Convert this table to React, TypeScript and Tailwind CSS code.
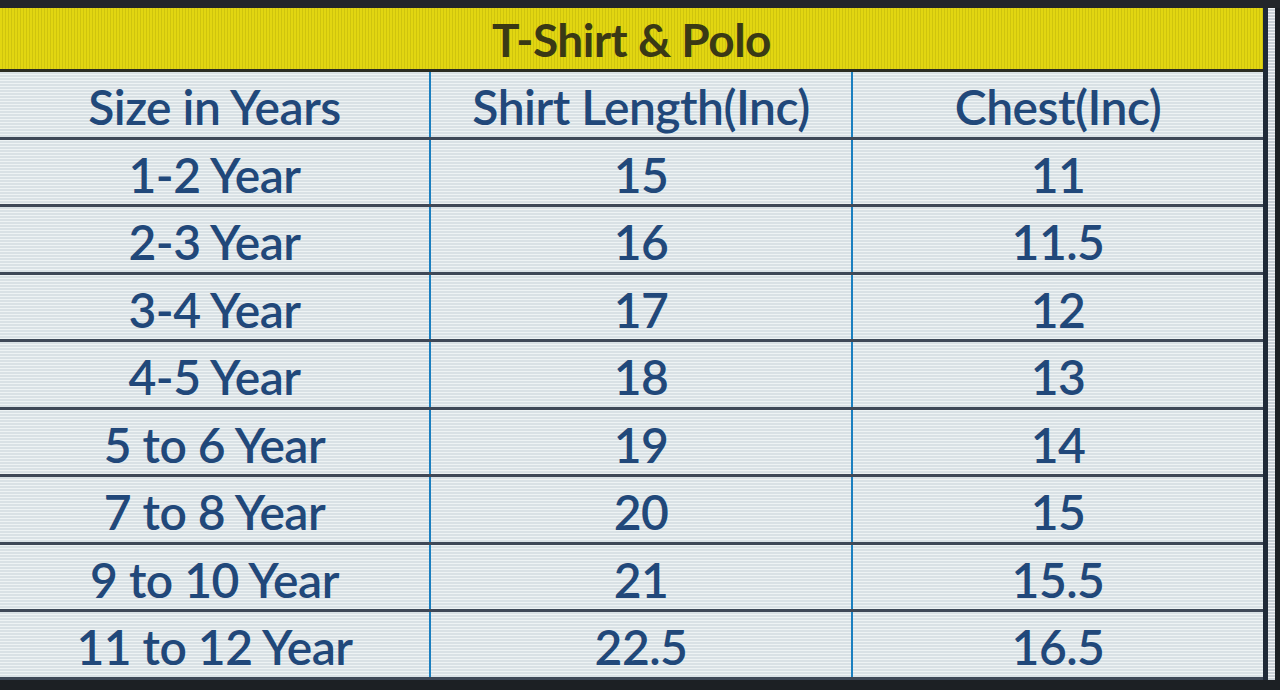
const rows: [string, string, string][] = [
  ["1-2 Year", "15", "11"],
  ["2-3 Year", "16", "11.5"],
  ["3-4 Year", "17", "12"],
  ["4-5 Year", "18", "13"],
  ["5 to 6 Year", "19", "14"],
  ["7 to 8 Year", "20", "15"],
  ["9 to 10 Year", "21", "15.5"],
  ["11 to 12 Year", "22.5", "16.5"],
];

const cell =
  "flex items-center justify-center pt-[6px] text-[48px] leading-none font-semibold text-[#21487a] tracking-[-0.5px]";

function Row({ cells }: { cells: [string, string, string] }) {
  return (
    <div className="grid h-[67.5px] grid-cols-[429px_2px_420px_2px_1fr] border-b-[3px] border-[#3e4857]">
      <div className={cell}>{cells[0]}</div>
      <div className="bg-[#1b7fbf]" />
      <div className={cell}>{cells[1]}</div>
      <div className="bg-[#1b7fbf]" />
      <div className={cell}>{cells[2]}</div>
    </div>
  );
}

export default function App() {
  return (
    <div
      className="flex h-[690px] w-[1280px] flex-col overflow-hidden bg-[#1c2024]"
      style={{ fontFamily: "Lato, 'Open Sans', sans-serif" }}
    >
      <div className="h-[8px] bg-[#23262a]" />
      <div className="flex">
        <div className="w-[1263px]">
          {/* Title bar */}
          <div className="flex h-[64px] items-center justify-center border-b-[3px] border-[#2b2c22] bg-[repeating-linear-gradient(90deg,#e2d611_0px,#e2d611_2px,#cfc40e_2px,#cfc40e_3px)]">
            <span className="pt-[2px] text-[46px] leading-none font-bold text-[#3a3915] tracking-[-0.5px]">
              T-Shirt &amp; Polo
            </span>
          </div>

          {/* Table body */}
          <div className="bg-[repeating-linear-gradient(0deg,#d9e1e5_0px,#d9e1e5_2px,#eef3f4_2px,#eef3f4_3px)]">
            <Row cells={["Size in Years", "Shirt Length(Inc)", "Chest(Inc)"]} />
            {rows.map((r) => (
              <Row key={r[0]} cells={r} />
            ))}
          </div>
        </div>
        <div className="w-[5px] bg-[#1f2a38]" />
        <div className="w-[7px] bg-[repeating-linear-gradient(0deg,#c9d0d6_0px,#c9d0d6_2px,#f0f2f4_2px,#f0f2f4_3px)]" />
      </div>
    </div>
  );
}
